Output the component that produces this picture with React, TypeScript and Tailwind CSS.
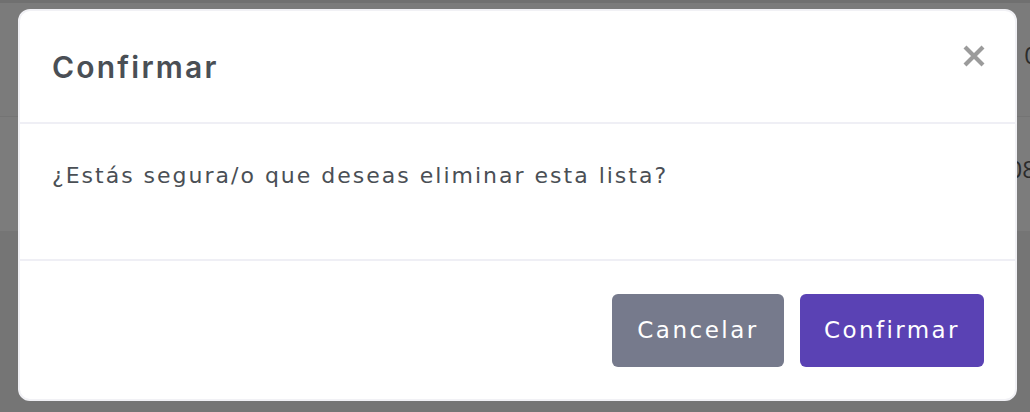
import React from "react";

export default function App() {
  return (
    <div className="relative w-[1030px] h-[412px] overflow-hidden bg-[#7b7b7b]" style={{ fontFamily: "'DejaVu Sans', sans-serif" }}>
      {/* page behind overlay */}
      <div className="flex flex-col w-full h-full">
        <div className="h-[3px] bg-[#707070]" />
        <div className="h-[114px] flex items-center justify-end border-b border-[#747474] text-[24px] text-[#2b2b2b]" style={{ fontFamily: "'Open Sans', sans-serif" }}>
          <span className="mr-[-8px] mt-[-10px]">0</span>
        </div>
        <div className="h-[114px] flex items-center justify-end bg-[#7c7c7c] text-[24px] text-[#2b2b2b]" style={{ fontFamily: "'Open Sans', sans-serif" }}>
          <span className="mr-[-6px] mt-[-10px]">08</span>
        </div>
        <div className="flex-1 bg-[#757575]" />
      </div>

      {/* modal */}
      <div className="absolute left-[18px] top-[9px] w-[999px] h-[392px] bg-white rounded-[12px] border-2 border-[#f1f1f5] flex flex-col">
        <div className="h-[113px] flex items-center justify-between pl-[32px] pr-[26px] border-b-2 border-[#efeff5]">
          <h2 className="text-[30px] leading-[45px] font-semibold text-[#4a4f55] tracking-[2.2px] mt-[1px]" style={{ fontFamily: "Inter, sans-serif" }}>Confirmar</h2>
          <button className="w-[30px] h-[30px] flex items-center justify-center mt-[-22px]">
            <svg width="24" height="24" viewBox="0 0 24 24">
              <path d="M3 3 L21 21 M21 3 L3 21" stroke="#9b9b9b" strokeWidth="4.2" strokeLinecap="butt" />
            </svg>
          </button>
        </div>
        <div className="h-[137px] pl-[32px] pt-[37px] border-b-2 border-[#efeff5]">
          <p className="text-[22px] text-[#4a4f55] leading-[30px] tracking-[2px]">¿Estás segura/o que deseas eliminar esta lista?</p>
        </div>
        <div className="flex-1 flex justify-end items-start gap-[16px] pt-[33px] pr-[31px]">
          <button className="w-[172px] h-[73px] rounded-[6px] bg-[#767a8c] text-white text-[23px] tracking-[2.5px]">Cancelar</button>
          <button className="w-[184px] h-[73px] rounded-[6px] bg-[#5a42b4] text-white text-[23px] tracking-[2.4px]">Confirmar</button>
        </div>
      </div>
    </div>
  );
}
